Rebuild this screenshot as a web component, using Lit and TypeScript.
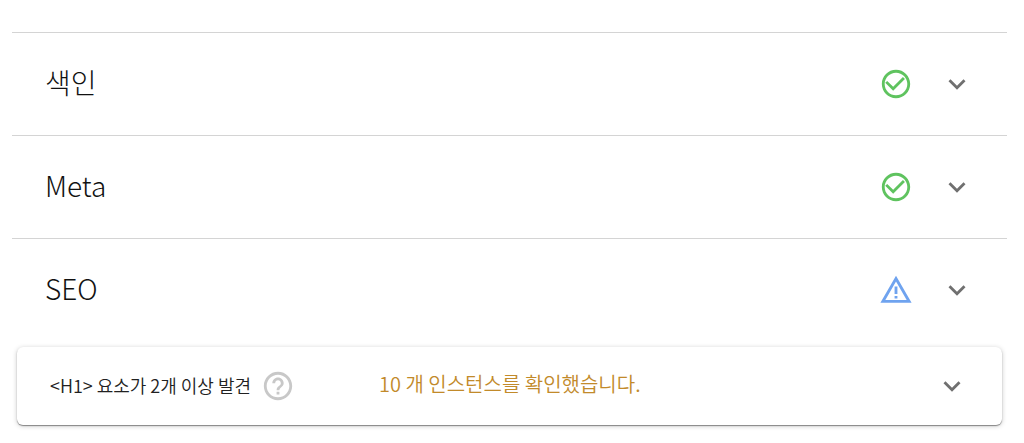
import { LitElement, html, css, svg } from "lit";
import { customElement, property, state } from "lit/decorators.js";

const PATHS = {
  pass: "M16.9 7 10 13.9l-4.2-4.1-1.4 1.4L10 16.8l8.3-8.4zM12 2C6.48 2 2 6.48 2 12s4.48 10 10 10 10-4.48 10-10S17.52 2 12 2zm0 18c-4.42 0-8-3.58-8-8s3.58-8 8-8 8 3.58 8 8-3.58 8-8 8z",
  warn: "M12 5.99 19.53 19H4.47L12 5.99M12 2 1 21h22L12 2zm1 14.3h-2V18h2v-1.7zm0-6.8h-2v5.4h2V9.5z",
  help: "M11 18h2v-2h-2v2zm1-16C6.48 2 2 6.48 2 12s4.48 10 10 10 10-4.48 10-10S17.52 2 12 2zm0 18c-4.41 0-8-3.59-8-8s3.59-8 8-8 8 3.59 8 8-3.59 8-8 8zm0-14c-2.21 0-4 1.79-4 4h2c0-1.1.9-2 2-2s2 .9 2 2c0 2-3 1.75-3 5h2c0-2.25 3-2.5 3-5 0-2.21-1.79-4-4-4z",
  chevron: "M16.59 8.59 12 13.17 7.41 8.59 6 10l6 6 6-6z",
};
type IconName = keyof typeof PATHS;

@customElement("ui-icon")
export class UiIcon extends LitElement {
  static styles = css`
    :host {
      display: block;
      flex: none;
      width: 34px;
      height: 34px;
    }
    svg {
      display: block;
      width: 100%;
      height: 100%;
      fill: currentColor;
    }
  `;
  @property() name: IconName = "chevron";
  render() {
    return html`<svg viewBox="0 0 24 24" aria-hidden="true">${svg`<path d=${PATHS[this.name]}></path>`}</svg>`;
  }
}

@customElement("app-root")
export class AppRoot extends LitElement {
  static styles = css`
    :host {
      display: block;
      background: #fff;
      color: #212121;
      font-family: "Noto Sans CJK KR", "Noto Sans", sans-serif;
      font-weight: 350;
    }
    main {
      padding: 32px 17px 18px 12px;
    }
    .section {
      border-top: 1px solid #d4d4d4;
    }
    h2,
    h3,
    p {
      margin: 0;
      font: inherit;
    }
    button {
      border: 0;
      padding: 0;
      background: none;
      color: inherit;
      font: inherit;
      text-align: left;
      cursor: pointer;
    }
    .header {
      display: flex;
      align-items: center;
      gap: 27px;
      width: 100%;
      height: 102px;
      padding: 0 33px;
    }
    .title {
      flex: 1;
      padding-bottom: 4px;
      color: #111;
      font-size: 28px;
      font-weight: 300;
      line-height: 36px;
    }
    .pass {
      color: #5fc35f;
    }
    .warn {
      color: #6fa3ef;
    }
    .chevron {
      color: #707070;
    }
    .card {
      display: grid;
      grid-template-columns: 329px 1fr auto;
      align-items: center;
      min-height: 78px;
      box-sizing: border-box;
      margin: 6px 5px 0;
      padding: 0 33px;
      border-radius: 6px;
      background: #fff;
      box-shadow:
        0 1px 1px rgba(0, 0, 0, 0.4),
        0 1px 5px rgba(0, 0, 0, 0.22);
    }
    .issue {
      display: flex;
      align-items: center;
      gap: 10px;
      font-size: 18px;
      line-height: 24px;
    }
    .issue h3 {
      padding-bottom: 2px;
    }
    .help {
      color: #c8c8c8;
    }
    .count {
      padding-bottom: 4px;
      color: #c28a2a;
      font-size: 20px;
      line-height: 28px;
    }
  `;

  @state() private open = new Set<string>(["SEO"]);

  private toggle(title: string) {
    const next = new Set(this.open);
    if (!next.delete(title)) next.add(title);
    this.open = next;
  }

  private section(title: string, status: IconName, body: unknown = "") {
    const open = this.open.has(title);
    return html`<section class="section">
      <h2>
        <button class="header" aria-expanded=${open} @click=${() => this.toggle(title)}>
          <span class="title">${title}</span>
          <ui-icon class=${status} name=${status}></ui-icon>
          <ui-icon class="chevron" name="chevron"></ui-icon>
        </button>
      </h2>
      ${open ? body : ""}
    </section>`;
  }

  render() {
    return html`<main>
      ${this.section("색인", "pass")} ${this.section("Meta", "pass")}
      ${this.section(
        "SEO",
        "warn",
        html`<article class="card">
          <div class="issue">
            <h3>&lt;H1&gt; 요소가 2개 이상 발견</h3>
            <button class="help" aria-label="도움말"><ui-icon name="help"></ui-icon></button>
          </div>
          <p class="count">10 개 인스턴스를 확인했습니다.</p>
          <button class="chevron" aria-label="펼치기"><ui-icon name="chevron"></ui-icon></button>
        </article>`,
      )}
    </main>`;
  }
}
